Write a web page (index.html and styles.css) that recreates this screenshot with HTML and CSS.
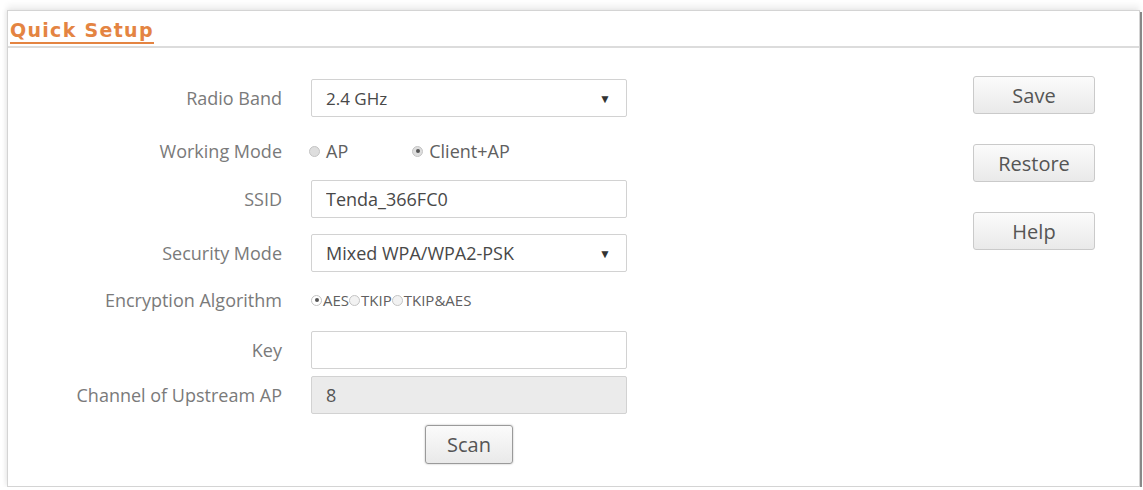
FILE: index.html
```html
<!DOCTYPE html>
<html lang="en">
<head>
    <meta charset="UTF-8">
    <meta name="viewport" content="width=device-width, initial-scale=1.0">
    <title>Quick Setup</title>
    <link rel="stylesheet" href="styles.css">
</head>
<body>
    <div class="panel">
        <div class="panel-head">
            <h2>Quick Setup</h2>
        </div>

        <div class="panel-body">
            <form class="setup-form" onsubmit="return false;">
                <div class="row">
                    <label for="band">Radio Band</label>
                    <div class="select-box">
                        <span id="band" class="band-value">2.4 GHz</span>
                        <span class="arrow">&#9660;</span>
                    </div>
                </div>

                <div class="row radio-row mode-row">
                    <label>Working Mode</label>
                    <div class="choices">
                        <span class="choice"><input type="radio" name="mode" id="mode-ap"> AP</span>
                        <span class="choice"><input type="radio" name="mode" id="mode-client" checked> Client+AP</span>
                    </div>
                </div>

                <div class="row ssid-row">
                    <label for="ssid">SSID</label>
                    <input type="text" id="ssid" class="text-box" value="Tenda_366FC0">
                </div>

                <div class="row">
                    <label for="security">Security Mode</label>
                    <div class="select-box">
                        <span id="security">Mixed WPA/WPA2-PSK</span>
                        <span class="arrow">&#9660;</span>
                    </div>
                </div>

                <div class="row radio-row cipher-row">
                    <label>Encryption Algorithm</label>
                    <div class="choices tight">
                        <span class="choice"><input type="radio" name="cipher" checked>AES</span>
                        <span class="choice"><input type="radio" name="cipher">TKIP</span>
                        <span class="choice"><input type="radio" name="cipher">TKIP&amp;AES</span>
                    </div>
                </div>

                <div class="row">
                    <label for="key">Key</label>
                    <input type="text" id="key" class="text-box">
                </div>

                <div class="row close-row">
                    <label for="channel">Channel of Upstream AP</label>
                    <input type="text" id="channel" class="text-box" value="8" disabled>
                </div>

                <div class="row scan-row">
                    <span></span>
                    <div class="scan-cell">
                        <button class="btn scan-btn">Scan</button>
                    </div>
                </div>
            </form>

            <div class="side-buttons">
                <button class="btn">Save</button>
                <button class="btn">Restore</button>
                <button class="btn">Help</button>
            </div>
        </div>
    </div>
</body>
</html>
```

FILE: styles.css
```css
body {
    margin: 0;
    padding: 10px 3px 0 7px;
    background-color: #fff;
    font-family: "Open Sans", Arial, sans-serif;
}

.panel {
    height: 477px;
    border: 1px solid #d4d4d4;
    background-color: #fff;
    box-shadow: 0 -5px 6px rgba(0, 0, 0, 0.06), -2px 0 4px rgba(0, 0, 0, 0.06), 2px 2px 0 #8c8c8c;
    box-sizing: border-box;
}

.panel-head {
    height: 35px;
    border-bottom: 2px solid #dcdcdc;
    padding-left: 2px;
}

.panel-head h2 {
    display: inline-block;
    margin: 0;
    padding-top: 7px;
    font-family: "DejaVu Sans", Verdana, sans-serif;
    font-size: 19px;
    font-weight: bold;
    letter-spacing: 1.3px;
    line-height: 24px;
    color: #e48442;
    border-bottom: 2px solid #e48442;
}

.panel-body {
    display: flex;
    padding-top: 31px;
}

/* Form rows: label column on the left, control column on the right */
.setup-form {
    width: 620px;
}

.row {
    display: grid;
    grid-template-columns: 274px 316px;
    column-gap: 29px;
    align-items: center;
    margin-top: 16px;
}

.row:first-child {
    margin-top: 0;
}

.row label {
    text-align: right;
    font-size: 18px;
    color: #7a7a7a;
}

.radio-row {
    height: 30px;
}

.mode-row {
    margin-top: 19px;
}

.ssid-row {
    margin-top: 14px;
}

.cipher-row {
    margin-top: 13px;
}

.close-row {
    margin-top: 7px;
}

.scan-row {
    margin-top: 11px;
}

.select-box, .text-box {
    height: 38px;
    box-sizing: border-box;
    border: 1px solid #d2d2d2;
    border-radius: 2px;
    background-color: #fff;
    font-family: "Open Sans", Arial, sans-serif;
    font-size: 18px;
    color: #484848;
    padding: 0 14px;
}

.band-value {
    font-size: 17px;
}

.select-box {
    display: flex;
    align-items: center;
    justify-content: space-between;
}

.select-box .arrow {
    font-size: 12px;
    color: #333;
    margin-right: 1px;
}

.text-box {
    width: 100%;
    outline: none;
}

.text-box:disabled {
    background-color: #ebebeb;
    color: #555;
}

.choices {
    display: flex;
    align-items: center;
    font-size: 18px;
    color: #606060;
}

.choice {
    display: flex;
    align-items: center;
    margin-right: 66px;
}

.choice input {
    appearance: none;
    width: 11px;
    height: 11px;
    margin: 0 6px 0 -2px;
    border: 1px solid #c4c4c4;
    border-radius: 50%;
    background-color: #dedede;
    box-sizing: border-box;
    position: relative;
}

.choice input:checked::after {
    content: "";
    position: absolute;
    left: 2.5px;
    top: 2.5px;
    width: 4px;
    height: 4px;
    border-radius: 50%;
    background-color: #555;
}

.choices.tight {
    font-size: 15px;
}

.choices.tight .choice {
    margin-right: 0;
}

.choices.tight .choice input {
    margin: 0 1px 0 0;
    background-color: #f2f2f2;
}

.choices.tight .choice input:checked {
    background-color: #fff;
}

.scan-cell {
    display: flex;
    justify-content: center;
}

.btn {
    height: 38px;
    border: 1px solid #cacaca;
    border-radius: 3px;
    background: linear-gradient(#fbfbfb, #e9e9e9);
    font-family: "Open Sans", Arial, sans-serif;
    font-size: 20px;
    color: #555;
    cursor: pointer;
}

.scan-btn {
    width: 88px;
    height: 39px;
    border-color: #9a9a9a;
    box-shadow: 0 0 2px rgba(0, 0, 0, 0.3);
}

.side-buttons {
    display: flex;
    flex-direction: column;
    gap: 30px;
    margin-left: auto;
    margin-right: 44px;
    margin-top: -3px;
}

.side-buttons .btn {
    width: 122px;
}
```
